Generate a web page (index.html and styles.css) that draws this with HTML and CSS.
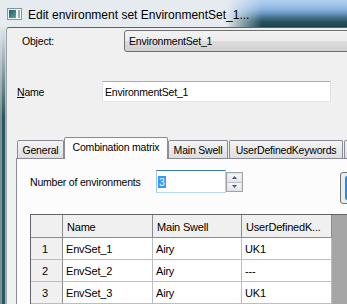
FILE: index.html
```html
<!DOCTYPE html>
<html>
<head>
<meta charset="utf-8">
<link rel="stylesheet" href="styles.css">
</head>
<body>
<div class="viewport">
<div class="window">
  <div class="titlebar">
    <svg class="app-icon" width="15" height="12" viewBox="0 0 15 12">
      <defs>
        <linearGradient id="ig" x1="0" y1="0" x2="1" y2="1">
          <stop offset="0" stop-color="#1d5a78"/>
          <stop offset="1" stop-color="#5aa88e"/>
        </linearGradient>
      </defs>
      <rect x="0.5" y="0.5" width="14" height="11" fill="#f3f5f7" stroke="#8a949c"/>
      <rect x="2" y="2" width="7" height="8" fill="url(#ig)"/>
      <rect x="11" y="2" width="2" height="8" fill="#9fb0bd"/>
    </svg>
    <span class="title">Edit environment set EnvironmentSet_1...</span>
  </div>
  <div class="body">
    <div class="frame-left"></div>
    <div class="client">
      <div class="obj-row">
        <span class="obj-label">Object:</span>
        <div class="combo">EnvironmentSet_1</div>
      </div>
      <div class="name-row">
        <span class="name-label"><u>N</u>ame</span>
        <div class="textbox">EnvironmentSet_1</div>
      </div>
      <div class="tabs">
        <div class="tab t-general">General</div>
        <div class="tab active t-comb">Combination matrix</div>
        <div class="tab t-swell">Main Swell</div>
        <div class="tab t-udk">UserDefinedKeywords</div>
        <div class="tab t-more"></div>
      </div>
      <div class="panel">
        <div class="spin-row">
          <span class="num-label">Number of environments</span>
          <div class="spin-text"><span class="sel">3</span></div>
          <div class="spin-btns">
            <div class="sb"><svg width="5" height="3" viewBox="0 0 5 3"><path d="M2.5 0 L5 3 L0 3 Z" fill="#4c5a78"/></svg></div>
            <div class="sb"><svg width="5" height="3" viewBox="0 0 5 3"><path d="M0 0 L5 0 L2.5 3 Z" fill="#4c5a78"/></svg></div>
          </div>
          <div class="btn"><div class="btn-inner"></div></div>
        </div>
        <div class="grid">
          <div class="grow head">
            <div class="c rh"></div>
            <div class="c">Name</div>
            <div class="c">Main Swell</div>
            <div class="c">UserDefinedK...</div>
          </div>
          <div class="grow">
            <div class="c rh">1</div>
            <div class="c">EnvSet_1</div>
            <div class="c">Airy</div>
            <div class="c">UK1</div>
          </div>
          <div class="grow">
            <div class="c rh">2</div>
            <div class="c">EnvSet_2</div>
            <div class="c">Airy</div>
            <div class="c">---</div>
          </div>
          <div class="grow">
            <div class="c rh">3</div>
            <div class="c">EnvSet_3</div>
            <div class="c">Airy</div>
            <div class="c">UK1</div>
          </div>
        </div>
      </div>
    </div>
  </div>
</div>
</div>
</body>
</html>
```
FILE: styles.css
```css
* { box-sizing: border-box; }
body {
  margin: 0;
  width: 347px;
  height: 304px;
  overflow: hidden;
  background: #f0f0f0;
  font-family: "Liberation Sans", Arial, sans-serif;
  font-size: 10.5px;
  letter-spacing: -0.2px;
  color: #000;
}
.viewport { width: 347px; height: 304px; overflow: hidden; }
.window { width: 430px; display: flex; flex-direction: column; }
.titlebar {
  height: 27px;
  flex: none;
  display: flex;
  align-items: center;
  padding-left: 7px;
  background:
    linear-gradient(to right, #e6ebf0 0, #e6ebf0 226px, rgba(230,235,240,0) 262px),
    linear-gradient(to bottom, #b4d0ef 0, #a0c4ea 5px, #86b0dc 10px, #6592b8 14px, #3f6e83 18px, #26505c 22px, #1c4550 27px);
}
.app-icon { margin-right: 6px; flex: none; }
.title { font-size: 12px; letter-spacing: 0; padding-top: 2px; white-space: nowrap; }
.body { display: flex; }
.frame-left {
  width: 6px;
  flex: none;
  background:
    linear-gradient(to bottom, #e2e7eb 0, rgba(226,231,235,0) 90px),
    linear-gradient(to right, #7b9096 0, #7b9096 2px, #2b555e 2px, #2b555e 5px, #a3b2b7 5px);
}
.client {
  flex: 1;
  border-top: 1px solid #55656b;
  border-left: 1px solid #9aa2a6;
  border-top-left-radius: 3px;
  background: #f0f0f0;
  display: flex;
  flex-direction: column;
}
.obj-row { margin-top: 2px; height: 22px; display: flex; align-items: center; }
.obj-label { width: 117px; padding-left: 15px; flex: none; }
.combo {
  width: 300px;
  height: 22px;
  border: 1px solid #707070;
  border-radius: 3px;
  background: linear-gradient(to bottom, #f3f3f3 0, #ececec 50%, #dcdcdc 50%, #d2d2d2 100%);
  padding-left: 4px;
  display: flex;
  align-items: center;
}
.name-row { margin-top: 29px; height: 21px; display: flex; align-items: center; }
.name-label { width: 95px; padding-left: 10px; flex: none; }
.textbox {
  width: 229px;
  height: 21px;
  border: 1px solid;
  border-color: #abadb3 #dbdfe6 #e3e9ef #e2e3ea;
  background: #fff;
  padding-left: 2px;
  display: flex;
  align-items: center;
}
.tabs { margin-top: 35px; margin-left: 10px; height: 21px; display: flex; align-items: flex-end; }
.tab {
  height: 18px;
  border: 1px solid #898c95;
  border-bottom: none;
  border-radius: 2px 2px 0 0;
  background: linear-gradient(to bottom, #f4f4f4 0, #e9e9e9 50%, #dedede 100%);
  display: flex;
  align-items: center;
  justify-content: center;
  white-space: nowrap;
  flex: none;
}
.tab.active {
  height: 22px;
  margin-bottom: -1px;
  background: #fcfcfc;
  position: relative;
  z-index: 1;
  align-items: flex-start;
  padding-top: 3px;
}
.t-general { width: 47px; }
.t-comb { width: 104px; }
.t-swell { width: 60px; }
.t-udk { width: 114px; margin-left: 1px; }
.t-more { width: 30px; margin-left: 1px; }
.panel {
  margin-left: 9px;
  border: 1px solid #898c95;
  background: #fcfcfc;
  padding: 11px 0 0 13px;
}
.spin-row { display: flex; align-items: flex-start; }
.num-label { width: 126px; height: 23px; display: flex; align-items: center; flex: none; }
.spin-text {
  width: 70px;
  height: 23px;
  flex: none;
  border: 1px solid;
  border-color: #3d7bad #b5cfe7 #b7d9ed #a4c9e3;
  background: #fff;
  padding: 5px 0 0 1px;
}
.sel {
  display: inline-block;
  height: 12px;
  line-height: 12px;
  padding: 0 1px;
  background: #3399ff;
  color: #fff;
  letter-spacing: 0;
}
.spin-btns {
  width: 17px;
  height: 20px;
  margin-top: 2px;
  flex: none;
  border: 1px solid #a3a3a3;
  display: flex;
  flex-direction: column;
}
.sb {
  flex: 1;
  border: 1px solid #e2e4ea;
  background: linear-gradient(to bottom, #f6f7f9, #e3e6ec);
  display: flex;
  align-items: center;
  justify-content: center;
}
.sb + .sb { border-top: 1px solid #b9bcc4; }
.btn {
  margin-left: 97px;
  margin-top: 2px;
  width: 40px;
  height: 32px;
  flex: none;
  border: 1px solid #707070;
  border-radius: 3px;
  background: #ececec;
  padding: 3px 0 3px 4px;
}
.btn-inner { height: 100%; background: #1e8ff0; border-radius: 2px 0 0 2px; }
.grid {
  margin-top: 10px;
  width: 340px;
  height: 90px;
  border-top: 1px solid #646464;
  border-left: 1px solid #646464;
  background: #a6a6a6;
}
.grow { display: grid; grid-template-columns: 32px 90px 89px 90px; height: 22px; }
.grow.head { height: 23px; }
.c {
  border-right: 1px solid #bdbdbd;
  border-bottom: 1px solid #bdbdbd;
  background: #fff;
  padding-left: 3px;
  display: flex;
  align-items: center;
  white-space: nowrap;
  overflow: hidden;
  font-size: 11px;
}
.head .c {
  background: #f0f0f0;
  padding-left: 4px;
  padding-top: 2px;
  border-right-color: #8c8c8c;
  border-bottom-color: #8c8c8c;
}
.c.rh {
  background: #f0f0f0;
  justify-content: center;
  padding: 0 3px 0 0;
  border-right-color: #8c8c8c;
}
```
